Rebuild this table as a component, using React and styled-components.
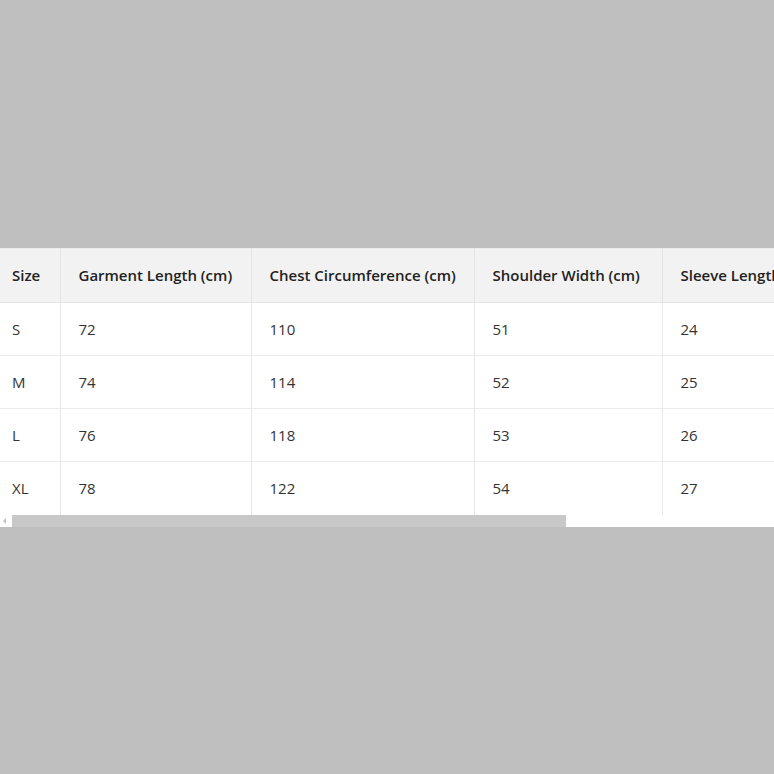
import styled, { createGlobalStyle } from "styled-components";

const GlobalStyle = createGlobalStyle`
  html, body {
    margin: 0;
    padding: 0;
    background: #bfbfbf;
  }
`;

const Page = styled.div`
  min-height: 100vh;
  display: flex;
  flex-direction: column;
  justify-content: center;
  font-family: "Open Sans", "Noto Sans", sans-serif;
`;

const Panel = styled.div`
  width: 100%;
  background: #ffffff;
`;

const Viewport = styled.div`
  width: 100%;
  overflow: hidden;
`;

const Table = styled.table`
  border-collapse: collapse;
  table-layout: fixed;
  width: 1048px;
  margin-left: -6px;
  font-size: 15px;
  color: #333333;
`;

const HeadCell = styled.th`
  background: #f2f2f2;
  color: #222222;
  font-weight: 600;
  text-align: left;
  height: 53px;
  padding: 0 18px;
  white-space: nowrap;
  border-right: 1px solid #e4e4e4;
  border-bottom: 1px solid #e4e4e4;
  border-top: 1px solid #ececec;
`;

const Cell = styled.td`
  height: 52px;
  padding: 0 18px;
  white-space: nowrap;
  border-right: 1px solid #e8e8e8;
  border-bottom: 1px solid ${(p) => (p.$last ? "transparent" : "#ececec")};
`;

const ScrollBar = styled.div`
  display: flex;
  height: 12px;
  background: #ffffff;
`;

const ArrowButton = styled.div`
  width: 12px;
  flex: none;
  display: flex;
  align-items: center;
  justify-content: center;

  &::before {
    content: "";
    border-style: solid;
    border-width: 3px 3px 3px 0;
    border-color: transparent #c4c4c4 transparent transparent;
    margin-left: -4px;
  }
`;

const Track = styled.div`
  flex: 1;
  position: relative;
`;

const Thumb = styled.div`
  height: 100%;
  background: #c8c8c8;
`;

const columns = [
  { label: "Size", width: 66 },
  { label: "Garment Length (cm)", width: 191 },
  { label: "Chest Circumference (cm)", width: 223 },
  { label: "Shoulder Width (cm)", width: 188 },
  { label: "Sleeve Length (cm)", width: 176 },
  { label: "Hem Circumference (cm)", width: 204 },
];

const rows = [
  ["S", "72", "110", "51", "24", "106"],
  ["M", "74", "114", "52", "25", "110"],
  ["L", "76", "118", "53", "26", "114"],
  ["XL", "78", "122", "54", "27", "118"],
];

const visible = 774;
const total = 1048;

export default function App() {
  return (
    <Page>
      <GlobalStyle />
      <Panel>
        <Viewport>
          <Table>
            <colgroup>
              {columns.map((c) => (
                <col key={c.label} style={{ width: c.width }} />
              ))}
            </colgroup>
            <thead>
              <tr>
                {columns.map((c) => (
                  <HeadCell key={c.label}>{c.label}</HeadCell>
                ))}
              </tr>
            </thead>
            <tbody>
              {rows.map((r, i) => (
                <tr key={r[0]}>
                  {r.map((v, j) => (
                    <Cell key={j} $last={i === rows.length - 1}>
                      {v}
                    </Cell>
                  ))}
                </tr>
              ))}
            </tbody>
          </Table>
        </Viewport>
        <ScrollBar>
          <ArrowButton />
          <Track>
            <Thumb style={{ width: `${(visible / total) * 100}%` }} />
          </Track>
          <ArrowButton style={{ visibility: "hidden" }} />
        </ScrollBar>
      </Panel>
    </Page>
  );
}
